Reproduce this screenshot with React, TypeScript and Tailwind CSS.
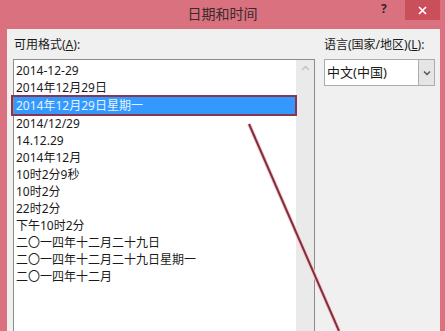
import React from 'react'

const formats = [
  '2014-12-29',
  '2014年12月29日',
  '2014年12月29日星期一',
  '2014/12/29',
  '14.12.29',
  '2014年12月',
  '10时2分9秒',
  '10时2分',
  '22时2分',
  '下午10时2分',
  '二〇一四年十二月二十九日',
  '二〇一四年十二月二十九日星期一',
  '二〇一四年十二月',
]

const font = { fontFamily: '"Noto Sans", "Noto Sans CJK SC", sans-serif' }

const App = () => {
  return (
    <div className="w-[445px] h-[331px] bg-[#d9717f] flex flex-col overflow-hidden relative" style={font}>
      {/* title bar */}
      <div className="h-[29px] relative flex items-center justify-center shrink-0">
        <span className="text-[14px] leading-[18px] text-[#3a2a2c] mt-[-1px]">日期和时间</span>
        <span className="absolute left-[381px] top-[1px] text-[12px] leading-[16px] font-bold text-[#3b2328]">?</span>
        <div className="absolute left-[405px] top-0 w-[35px] h-[20px] bg-[#c9505a] flex items-center justify-center">
          <svg width="9" height="9" viewBox="0 0 9 9">
            <path d="M1 1 L8 8 M8 1 L1 8" stroke="#fff" strokeWidth="1.6" />
          </svg>
        </div>
      </div>

      {/* client */}
      <div className="ml-[7px] mr-[5px] flex-1 bg-[#f0f0f0] flex pl-[6px] pt-[8px] text-[#1a1a1a]">
        <div className="w-[302px] flex flex-col">
          <div className="text-[12px] h-[22px] leading-[16px] pl-[1px]">
            可用格式(<span className="underline">A</span>):
          </div>
          <div className="flex-1 bg-white border border-[#8c8c8c] border-b-0 flex">
            <ul className="flex-1 pt-[2px] text-[12px] leading-[17px]">
              {formats.map((f, i) =>
                i === 2 ? (
                  <li key={f} className="relative h-[17px] my-[1px] bg-[#3399ff] text-[#e6f2ff] pl-[2px] mr-[-1px]">
                    {f}
                    <span className="absolute left-[-3px] right-[0px] top-[-2px] bottom-[-2px] border-2 border-[#8a3550]" />
                  </li>
                ) : (
                  <li key={f} className="h-[17px] pl-[2px]">
                    {f}
                  </li>
                )
              )}
            </ul>
            <div className="w-[18px] bg-[#eaeaea] flex justify-center pt-[5px]">
              <svg width="9" height="6" viewBox="0 0 9 6">
                <path d="M1 5 L4.5 1.5 L8 5" stroke="#c4c4c4" strokeWidth="1.5" fill="none" />
              </svg>
            </div>
          </div>
        </div>

        <div className="ml-[9px] w-[111px] flex flex-col">
          <div className="text-[12px] h-[22px] leading-[16px]">
            语言(国家/地区)(<span className="underline">L</span>):
          </div>
          <div className="h-[27px] bg-white border border-[#acacac] flex">
            <span className="flex-1 text-[13px] leading-[25px] pl-[2px]">中文(中国)</span>
            <div className="w-[16px] bg-[#e5e5e5] border-l border-[#acacac] flex items-center justify-center">
              <svg width="8" height="6" viewBox="0 0 8 6">
                <path d="M1 1.5 L4 4.5 L7 1.5" stroke="#555" strokeWidth="1.5" fill="none" />
              </svg>
            </div>
          </div>
        </div>
      </div>

      {/* annotation arrow line */}
      <svg className="absolute left-0 top-0 pointer-events-none" width="445" height="331">
        <line x1="249" y1="124" x2="339" y2="331" stroke="#ffc8cc" strokeWidth="4" />
        <line x1="249" y1="124" x2="339" y2="331" stroke="#7a3242" strokeWidth="2" />
      </svg>
    </div>
  )
}

export default App
